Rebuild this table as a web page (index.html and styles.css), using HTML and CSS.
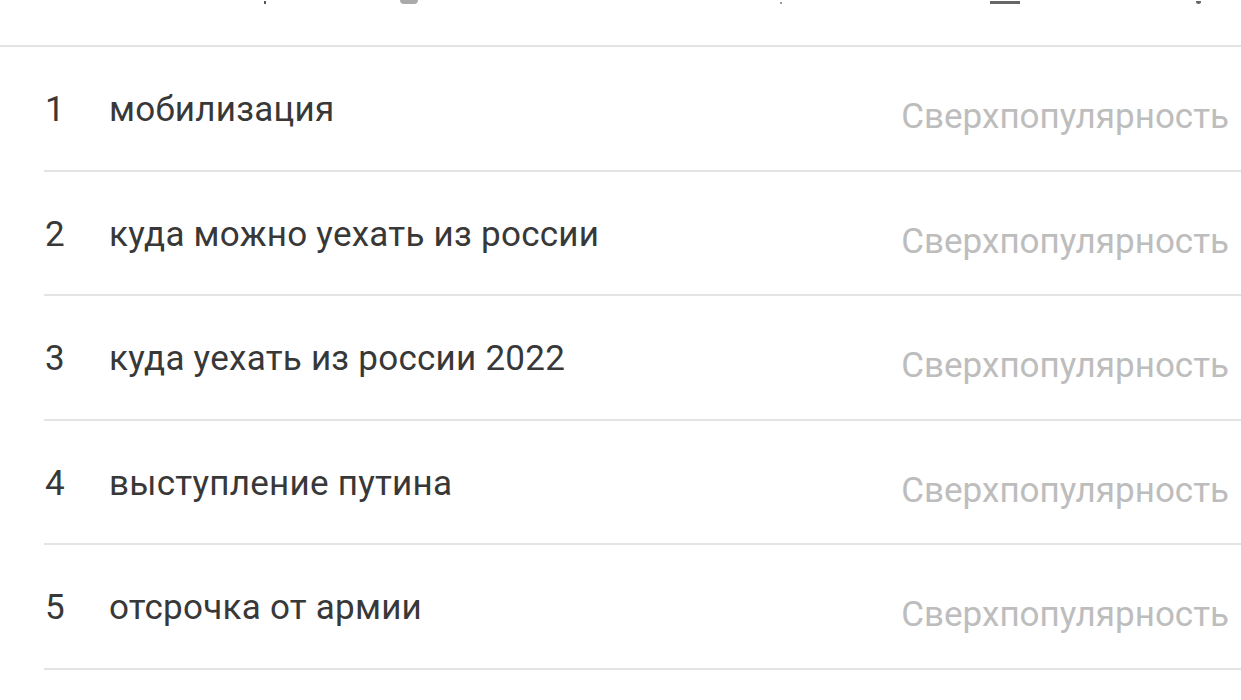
FILE: index.html
```html
<!DOCTYPE html>
<html lang="ru">
<head>
    <meta charset="UTF-8">
    <meta name="viewport" content="width=device-width, initial-scale=1.0">
    <title>Популярные запросы</title>
    <link rel="stylesheet" href="styles.css">
</head>
<body>
    <header class="toolbar">
        <div class="toolbar-icons">
            <span class="icon icon-pin"></span>
            <span class="icon icon-help"></span>
            <span class="icon icon-dot"></span>
            <span class="icon icon-bar"></span>
            <span class="icon icon-more"></span>
        </div>
    </header>

    <ul class="query-list">
        <li class="query">
            <span class="rank">1</span>
            <span class="title">мобилизация</span>
            <span class="value">Сверхпопулярность</span>
        </li>
        <li class="query">
            <span class="rank">2</span>
            <span class="title">куда можно уехать из россии</span>
            <span class="value">Сверхпопулярность</span>
        </li>
        <li class="query">
            <span class="rank">3</span>
            <span class="title">куда уехать из россии 2022</span>
            <span class="value">Сверхпопулярность</span>
        </li>
        <li class="query">
            <span class="rank">4</span>
            <span class="title">выступление путина</span>
            <span class="value">Сверхпопулярность</span>
        </li>
        <li class="query">
            <span class="rank">5</span>
            <span class="title">отсрочка от армии</span>
            <span class="value">Сверхпопулярность</span>
        </li>
    </ul>
</body>
</html>
```

FILE: styles.css
```css
body {
    margin: 0;
    padding: 0;
    background: #fff;
    font-family: Roboto, "Liberation Sans", Arial, sans-serif;
    color: #333;
    overflow: hidden;
}

/* шапка карточки, видна только нижняя кромка иконок */
.toolbar {
    height: 45px;
    border-bottom: 2px solid #e4e4e4;
    overflow: hidden;
}

.toolbar-icons {
    display: flex;
    align-items: flex-end;
    height: 4px;
}

.icon {
    display: block;
    background: #555;
}

.icon-pin {
    width: 2px;
    height: 3px;
    margin-left: 264px;
}

.icon-help {
    width: 18px;
    height: 4px;
    margin-left: 134px;
    border-radius: 0 0 9px 9px;
    background: #aaa;
}

.icon-dot {
    width: 2px;
    height: 2px;
    margin-left: 362px;
    background: #999;
}

.icon-bar {
    width: 30px;
    height: 3px;
    margin-left: 208px;
    background: #666;
}

.icon-more {
    width: 5px;
    height: 3px;
    margin-left: 176px;
    border-radius: 0 0 3px 3px;
    background: #666;
}

.query-list {
    list-style: none;
    margin: 0;
    padding: 0;
}

.query {
    display: flex;
    align-items: flex-start;
    height: 122.6px;
    margin-left: 44px;
    border-bottom: 2px solid #e4e4e4;
    box-sizing: content-box;
    font-size: 35px;
    line-height: 40px;
}

.rank {
    width: 64px;
    padding-top: 43px;
    padding-left: 1px;
    color: #383838;
}

.title {
    flex: 1;
    padding-top: 43px;
    letter-spacing: 0.25px;
    color: #383838;
}

.value {
    padding-top: 50px;
    padding-right: 12px;
    color: #bdbdbd;
}
```
